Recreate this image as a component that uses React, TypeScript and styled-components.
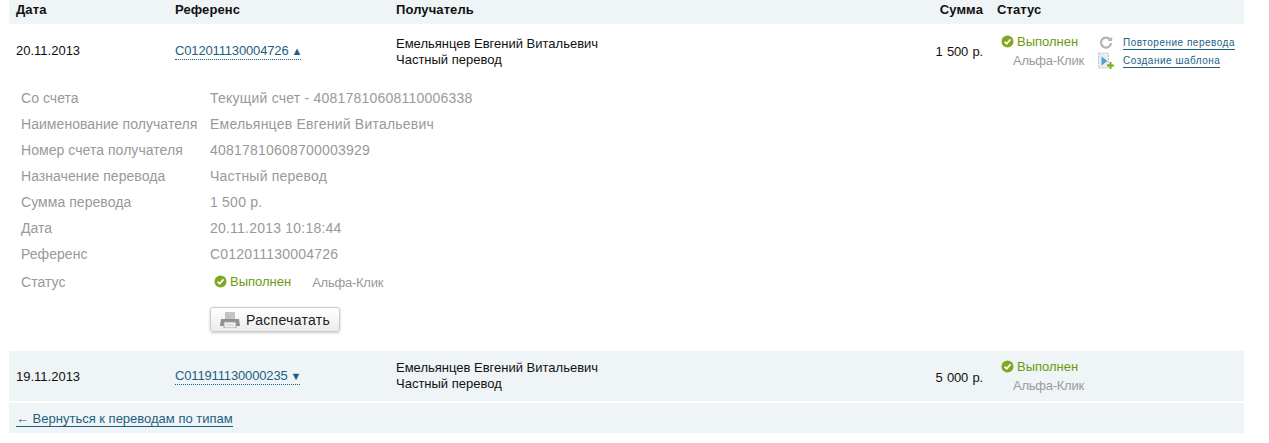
import styled, { createGlobalStyle } from 'styled-components';

const GlobalStyle = createGlobalStyle`
  html, body {
    margin: 0;
    padding: 0;
    background: #ffffff;
    font-family: "Liberation Sans", Arial, sans-serif;
  }
`;

const details = [
  { label: 'Со счета', value: 'Текущий счет - 40817810608110006338' },
  { label: 'Наименование получателя', value: 'Емельянцев Евгений Витальевич' },
  { label: 'Номер счета получателя', value: '40817810608700003929' },
  { label: 'Назначение перевода', value: 'Частный перевод' },
  { label: 'Сумма перевода', value: '1 500 р.' },
  { label: 'Дата', value: '20.11.2013 10:18:44' },
  { label: 'Референс', value: 'C012011130004726' },
];

const CheckIcon = () => (
  <svg width="13" height="13" viewBox="0 0 13 13">
    <circle cx="6.5" cy="6.5" r="6" fill="#7fa821" />
    <path d="M3.6 6.6l2.1 2.2 3.8-4.4" fill="none" stroke="#ffffff" strokeWidth="1.7" />
  </svg>
);

const RepeatIcon = () => (
  <svg width="14" height="14" viewBox="0 0 14 14">
    <path d="M11.2 3.8A5 5 0 1 0 12 7" fill="none" stroke="#b1b3b3" strokeWidth="2.2" />
    <path d="M8.8 5h4.4V.8z" fill="#b1b3b3" />
  </svg>
);

const TemplateIcon = () => (
  <svg width="18" height="18" viewBox="0 0 18 18">
    <path d="M1.5 1h10v15h-10z" fill="#eceeee" stroke="#c4c6c6" strokeDasharray="2 1" />
    <path d="M4.5 4.5l6 4.5-6 4.5z" fill="#45a5dc" />
    <path d="M12.5 10h2v2.5H17v2h-2.5V17h-2v-2.5H10v-2h2.5z" fill="#74ad1f" />
  </svg>
);

const PrinterIcon = () => (
  <svg width="20" height="16" viewBox="0 0 20 16">
    <path d="M5 0h10v7H5z" fill="#c3c5c5" />
    <path d="M1 7h18l1 7H0z" fill="#8c9091" />
    <path d="M4 10h12v6H4z" fill="#f4f4f4" stroke="#a5a8a8" />
    <path d="M6 13h8" stroke="#c6c8c8" />
  </svg>
);

const Status = () => (
  <StatusLine>
    <CheckIcon />
    <span>Выполнен</span>
  </StatusLine>
);

const App = () => {
  return (
    <Page>
      <GlobalStyle />
      <HeadRow>
        <span>Дата</span>
        <span>Референс</span>
        <span>Получатель</span>
        <SumHead>Сумма</SumHead>
        <span>Статус</span>
      </HeadRow>

      <Row $height={54}>
        <DateCell>20.11.2013</DateCell>
        <RefCell>
          <RefLink>
            C012011130004726<Arrow>▲</Arrow>
          </RefLink>
        </RefCell>
        <Recipient $pushed>
          <div>Емельянцев Евгений Витальевич</div>
          <div>Частный перевод</div>
        </Recipient>
        <Sum>1 500 р.</Sum>
        <StatusCell>
          <Status />
          <Channel>Альфа-Клик</Channel>
        </StatusCell>
        <Actions>
          <Action>
            <ActionIcon><RepeatIcon /></ActionIcon>
            <ActionLink>Повторение перевода</ActionLink>
          </Action>
          <Action>
            <ActionIcon><TemplateIcon /></ActionIcon>
            <ActionLink>Создание шаблона</ActionLink>
          </Action>
        </Actions>
      </Row>

      <Details>
        {details.map((item) => (
          <DetailRow key={item.label}>
            <span>{item.label}</span>
            <DetailValue>{item.value}</DetailValue>
          </DetailRow>
        ))}
        <StatusRow>
          <span>Статус</span>
          <DetailStatus>
            <DetailStatusText>
              <Status />
            </DetailStatusText>
            <DetailChannel>Альфа-Клик</DetailChannel>
          </DetailStatus>
        </StatusRow>
        <ButtonRow>
          <PrintButton>
            <PrinterIcon />
            Распечатать
          </PrintButton>
        </ButtonRow>
      </Details>

      <Row $height={50} $shaded>
        <DateCell $pushed>19.11.2013</DateCell>
        <RefCell>
          <RefLink>
            C011911130000235<Arrow>▼</Arrow>
          </RefLink>
        </RefCell>
        <Recipient>
          <div>Емельянцев Евгений Витальевич</div>
          <div>Частный перевод</div>
        </Recipient>
        <Sum $pushed>5 000 р.</Sum>
        <StatusCell>
          <Status />
          <Channel>Альфа-Клик</Channel>
        </StatusCell>
      </Row>

      <Footer>
        <BackLink>← Вернуться к переводам по типам</BackLink>
      </Footer>
    </Page>
  );
};

export default App;

const Page = styled.div`
  width: 1235px;
  margin-left: 9px;
  height: 443px;
  font-size: 13px;
  color: #111111;
`;

const columns = '159px 221px 1fr 68px 99px 148px';

const HeadRow = styled.div`
  display: grid;
  grid-template-columns: 159px 221px 1fr 68px 247px;
  align-items: center;
  height: 24px;
  padding: 0 0 5px 7px;
  background: #eff4f6;
  font-size: 13px;
  font-weight: 700;
  letter-spacing: 0.1px;
  color: #111111;
  box-sizing: border-box;
`;

const SumHead = styled.span`
  text-align: right;
  margin-right: 14px;
`;

const Row = styled.div<{ $shaded?: boolean; $height: number }>`
  display: grid;
  grid-template-columns: ${columns};
  align-items: center;
  height: ${(p) => p.$height}px;
  padding-left: 7px;
  background: ${(p) => (p.$shaded ? '#eff4f6' : '#ffffff')};
`;

const DateCell = styled.div<{ $pushed?: boolean }>`
  line-height: 16px;
  padding-top: ${(p) => (p.$pushed ? '2px' : '0')};
`;

const RefCell = styled.div`
  display: flex;
`;

const RefLink = styled.span`
  display: flex;
  align-items: center;
  letter-spacing: -0.15px;
  color: #1d5f83;
  line-height: 16px;
  border-bottom: 1px dotted #1d5f83;
`;

const Arrow = styled.span`
  margin-left: 3px;
  width: 9px;
  font-size: 11px;
  letter-spacing: 0;
`;

const Recipient = styled.div<{ $pushed?: boolean }>`
  line-height: 16px;
  padding-top: ${(p) => (p.$pushed ? '2px' : '0')};
`;

const Sum = styled.div<{ $pushed?: boolean }>`
  text-align: right;
  margin-right: 14px;
  padding-top: ${(p) => (p.$pushed ? '2px' : '0')};
  letter-spacing: -0.2px;
  word-spacing: 1px;
`;

const StatusCell = styled.div`
  display: flex;
  flex-direction: column;
  gap: 3px;
  padding-left: 4px;
`;

const StatusLine = styled.div`
  display: flex;
  align-items: center;
  gap: 3px;
  line-height: 16px;
  color: #6a9a10;
`;

const Channel = styled.div`
  color: #9b9b9b;
  line-height: 16px;
  padding-left: 12px;
  letter-spacing: -0.25px;
`;

const Actions = styled.div`
  display: flex;
  flex-direction: column;
  gap: 2px;
  padding: 2px 0 0 1px;
`;

const Action = styled.div`
  display: flex;
  align-items: center;
  height: 16px;
`;

const ActionIcon = styled.div`
  display: flex;
  justify-content: center;
  width: 18px;
  margin-right: 8px;
`;

const ActionLink = styled.span`
  font-size: 10px;
  letter-spacing: 0.5px;
  line-height: 13px;
  color: #1d5f83;
  border-bottom: 1px solid #1d5f83;
`;

const Details = styled.div`
  height: 273px;
  padding: 7px 0 0 12px;
  box-sizing: border-box;
  font-size: 14px;
  letter-spacing: 0.05px;
  color: #999999;
`;

const DetailRow = styled.div`
  display: grid;
  grid-template-columns: 189px 1fr;
  height: 26px;
  line-height: 26px;
`;

const DetailValue = styled.span`
  letter-spacing: 0.22px;
`;

const StatusRow = styled(DetailRow)`
  height: 30px;
  line-height: 30px;
`;

const DetailStatus = styled.div`
  display: flex;
  align-items: center;
  padding-left: 4px;
  font-size: 13px;
  letter-spacing: 0;
`;

const DetailStatusText = styled.div`
  padding-bottom: 2px;
`;

const DetailChannel = styled.span`
  margin-left: 21px;
  padding-top: 1px;
  letter-spacing: -0.25px;
  color: #999999;
`;

const ButtonRow = styled.div`
  padding: 10px 0 0 189px;
`;

const PrintButton = styled.button`
  display: flex;
  align-items: center;
  gap: 6px;
  width: 130px;
  height: 25px;
  padding: 0 0 0 9px;
  border: 1px solid #c9cccd;
  border-radius: 3px;
  background: linear-gradient(#ffffff, #ececec);
  box-shadow: 0 1px 3px rgba(0, 0, 0, 0.2);
  font-family: inherit;
  font-size: 14px;
  letter-spacing: 0.3px;
  color: #222222;
`;

const Footer = styled.div`
  display: flex;
  align-items: center;
  height: 30px;
  margin-top: 2px;
  padding: 2px 0 0 7px;
  box-sizing: border-box;
  background: #eff4f6;
`;

const BackLink = styled.span`
  font-size: 13px;
  line-height: 14px;
  color: #1d5f83;
  border-bottom: 1px solid #1d5f83;
`;
